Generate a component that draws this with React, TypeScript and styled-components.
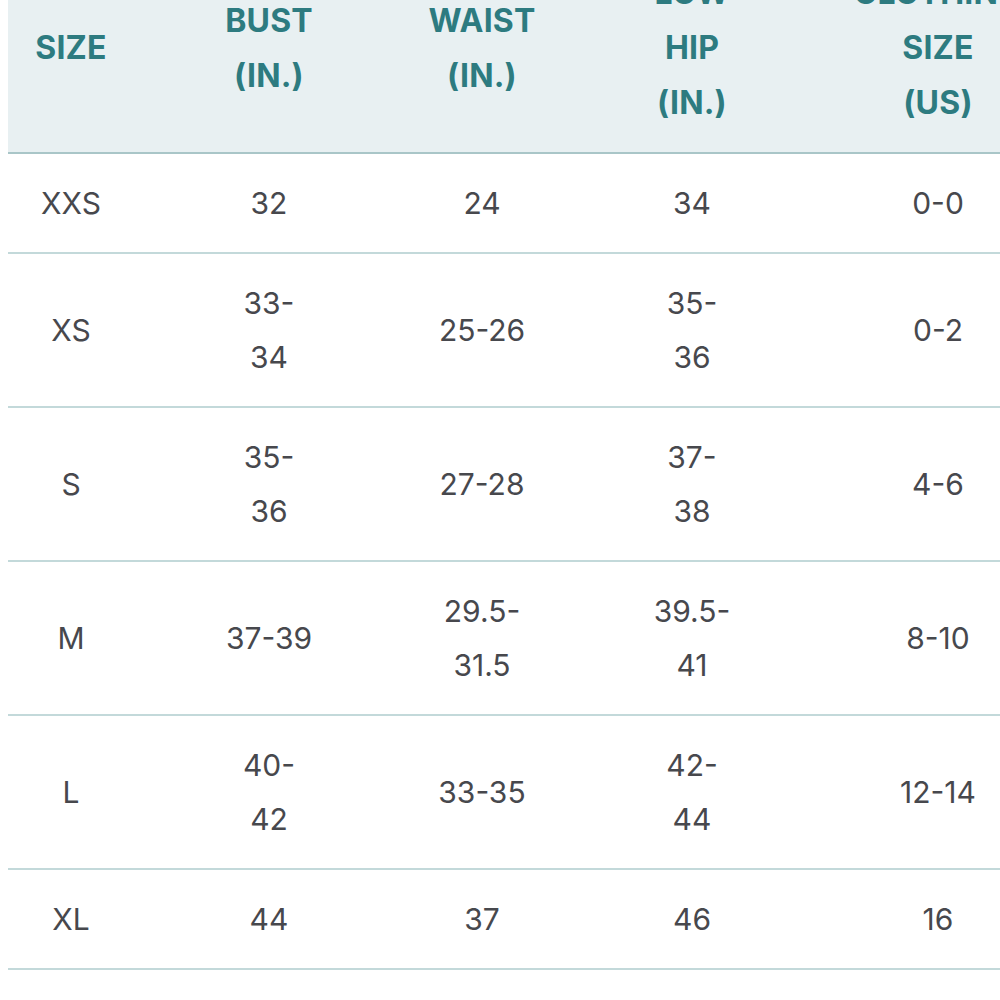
import React from "react";
import styled, { createGlobalStyle } from "styled-components";

const Global = createGlobalStyle`
  html, body { margin: 0; padding: 0; background: #ffffff; overflow: hidden; }
  body { font-family: Inter, "Open Sans", "Liberation Sans", sans-serif; }
`;

const COLS = "126px 270px 156px 264px 228px";

const Table = styled.div`
  margin: -57px 0 0 8px;
  width: 1044px;
`;

const HeaderRow = styled.div`
  display: grid;
  grid-template-columns: ${COLS};
  align-items: center;
  background: #e8f0f2;
  border-bottom: 2px solid #a9c6c8;
  padding: 22px 0;
`;

const HeadCell = styled.div`
  text-align: center;
  white-space: pre-line;
  font-weight: 700;
  font-size: 32px;
  line-height: 55px;
  color: #2d7b80;
  letter-spacing: 0.2px;
`;

const Row = styled.div<{ $tall?: boolean }>`
  display: grid;
  grid-template-columns: ${COLS};
  align-items: center;
  border-bottom: 2px solid #c3d9da;
  padding: 22px 0;
`;

const Cell = styled.div`
  text-align: center;
  white-space: pre-line;
  font-weight: 400;
  font-size: 30px;
  line-height: 54px;
  color: #47484d;
`;

const headers = ["SIZE", "BUST\n(IN.)", "WAIST\n(IN.)", "LOW\nHIP\n(IN.)", "CLOTHING\nSIZE\n(US)"];

const rows: string[][] = [
  ["XXS", "32", "24", "34", "0-0"],
  ["XS", "33-\n34", "25-26", "35-\n36", "0-2"],
  ["S", "35-\n36", "27-28", "37-\n38", "4-6"],
  ["M", "37-39", "29.5-\n31.5", "39.5-\n41", "8-10"],
  ["L", "40-\n42", "33-35", "42-\n44", "12-14"],
  ["XL", "44", "37", "46", "16"],
];

export default function App() {
  return (
    <>
      <Global />
      <Table>
        <HeaderRow>
          {headers.map((h) => (
            <HeadCell key={h}>{h}</HeadCell>
          ))}
        </HeaderRow>
        {rows.map((r) => (
          <Row key={r[0]}>
            {r.map((c, i) => (
              <Cell key={i}>{c}</Cell>
            ))}
          </Row>
        ))}
      </Table>
    </>
  );
}
